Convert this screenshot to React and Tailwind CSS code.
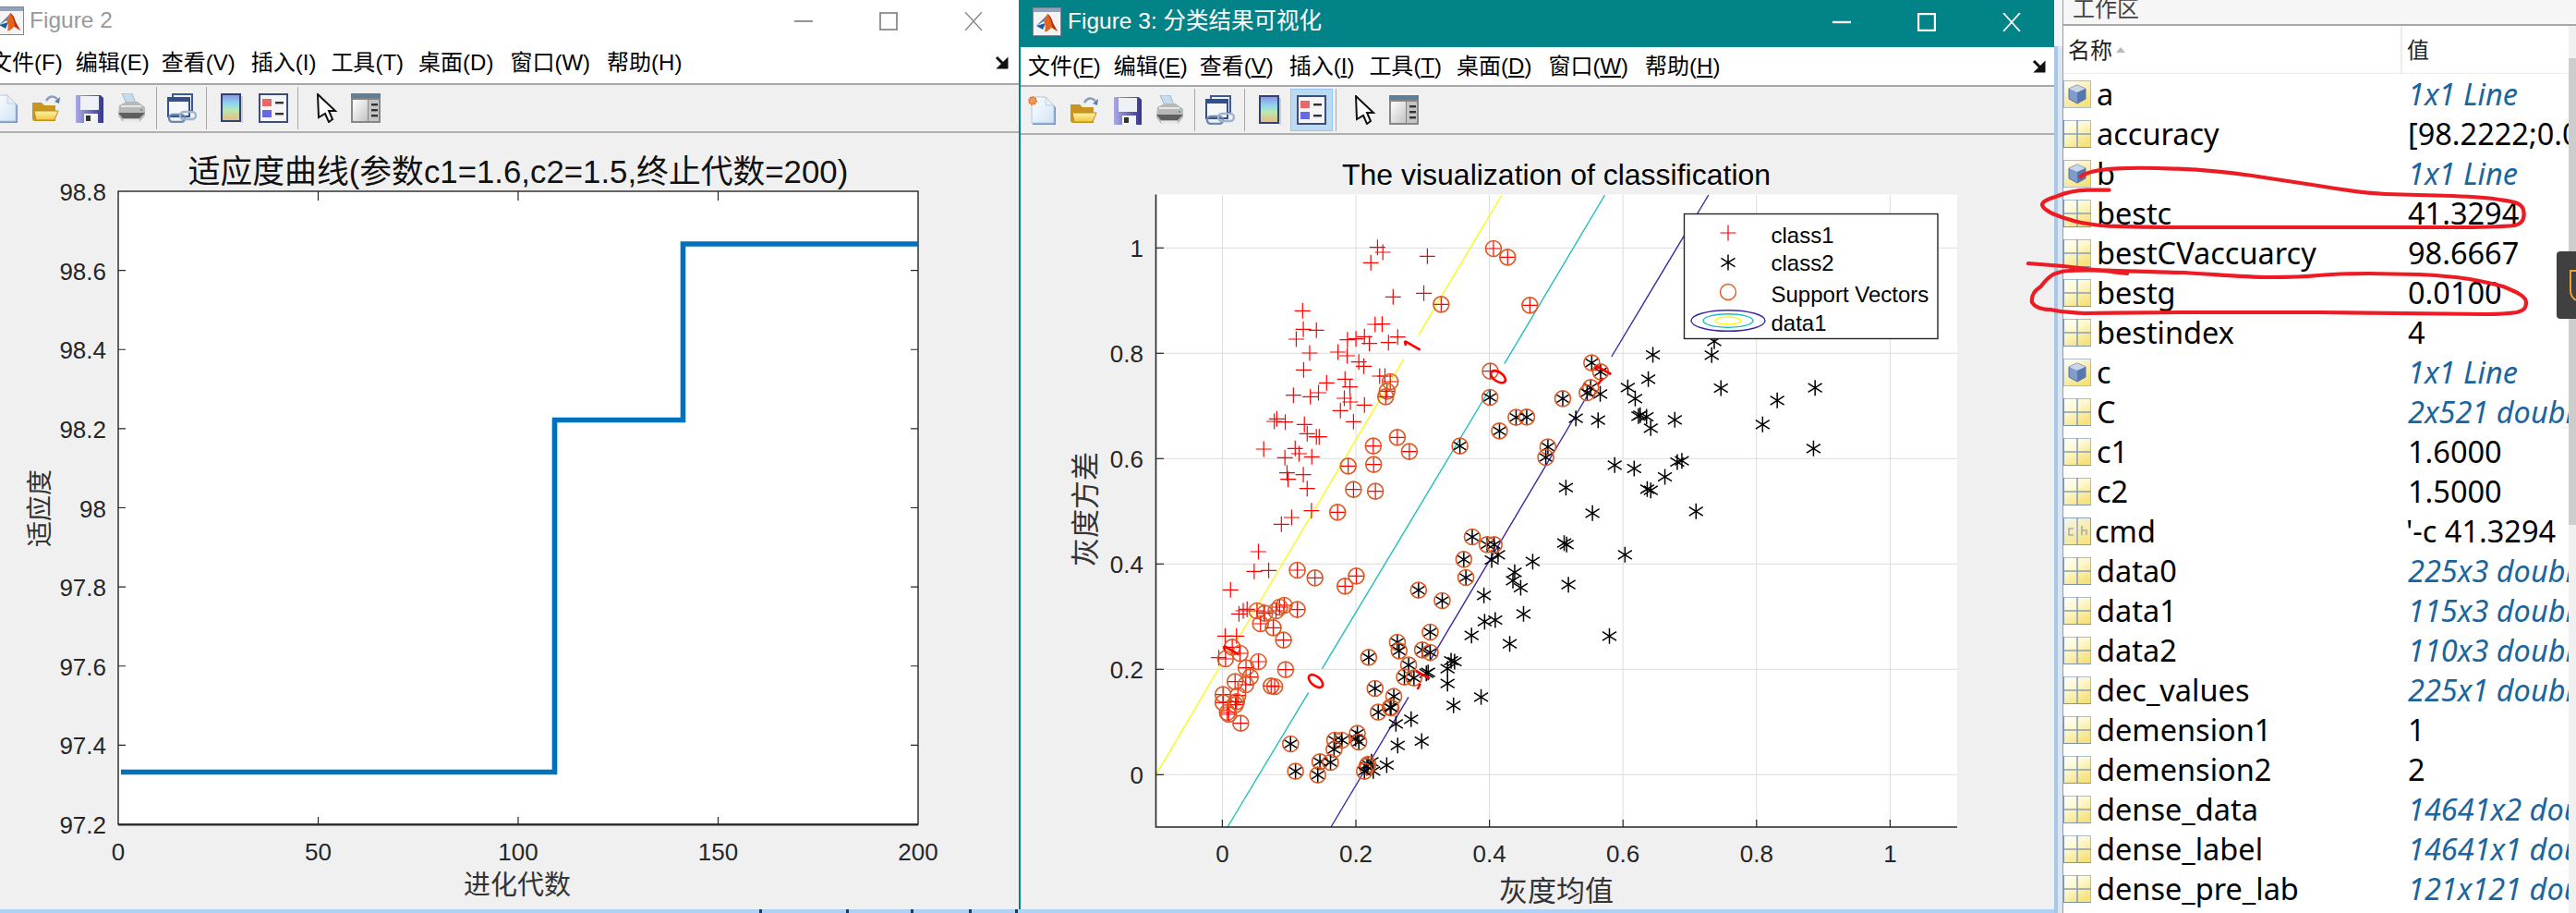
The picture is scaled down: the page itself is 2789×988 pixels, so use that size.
import React from "react";

const SANS = "[font-family:'Liberation_Sans','Noto_Sans_CJK_SC',sans-serif]";
const LABEL = "'Liberation Sans','Noto Sans CJK SC',sans-serif";

const menuItems = [
  ["文件", "F", ""],
  ["编辑", "E", "ml-[14px]"],
  ["查看", "V", "ml-[13px]"],
  ["插入", "I", "ml-[17px]"],
  ["工具", "T", "ml-[16px]"],
  ["桌面", "D", "ml-[16px]"],
  ["窗口", "W", "ml-[18px]"],
  ["帮助", "H", "ml-[18px]"],
];

function MatlabIcon() {
  return (
    <svg width="31" height="31" viewBox="0 0 31 31" className="shrink-0">
      <rect x="0.5" y="0.5" width="30" height="30" fill="#f4f4f4" stroke="#7d8797" />
      <rect x="1" y="1" width="29" height="4" fill="#8fa3bd" />
      <path d="M4 20 L12 15 L16 8 Z" fill="#3a7cc4" />
      <path d="M4 20 L11 24 L14 17 Z" fill="#1f5aa0" />
      <path d="M16 7 Q19 8 22 17 L27 26 L20 22 Q16 27 13 26 Q15 20 12 15 Z" fill="#e2641d" />
      <path d="M16 7 Q20 9 22 17 L27 26 L21 21 Q20 13 16 7 Z" fill="#b5301a" />
    </svg>
  );
}

function Controls({ color, strong }) {
  const w = strong ? 2.4 : 1.8;
  return (
    <div className="ml-auto flex gap-[72px]">
      <svg width="20" height="20" viewBox="0 0 20 20">
        <path d="M0 10 H20" stroke={color} strokeWidth={w} />
      </svg>
      <svg width="20" height="20" viewBox="0 0 20 20">
        <rect x="1" y="1" width="18" height="18" fill="none" stroke={color} strokeWidth={w} />
      </svg>
      <svg width="20" height="20" viewBox="0 0 20 20">
        <path d="M1 0 L19 20 M19 0 L1 20" stroke={color} strokeWidth={strong ? 1.8 : 1.4} />
      </svg>
    </div>
  );
}

function Menu({ underline, offset }) {
  return (
    <div className={`flex items-center text-[24px] leading-none text-black whitespace-nowrap ${offset}`}>
      {menuItems.map(([zh, key, gap]) => (
        <span key={zh} className={gap}>
          {zh}(<span className={underline ? "underline underline-offset-2" : ""}>{key}</span>)
        </span>
      ))}
    </div>
  );
}

function NewIcon() {
  return (
    <svg width="32" height="32" viewBox="0 0 32 32" className="ml-[7px] shrink-0">
      <defs>
        <linearGradient id="pg" x1="0" y1="0" x2="1" y2="1">
          <stop offset="0" stopColor="#ffffff" />
          <stop offset="1" stopColor="#cfe4f7" />
        </linearGradient>
      </defs>
      <path d="M6 3 H21 L31 13 V32 H6 Z" fill="#7f93c2" />
      <path d="M5 2 H20 L29 11 V30 H5 Z" fill="url(#pg)" stroke="#b4c6e0" />
      <path d="M20 2 V11 H29 Z" fill="#e7effa" stroke="#a9bcd8" strokeWidth="0.6" />
      <circle cx="6" cy="6" r="4" fill="#ee9a55" stroke="#e0632a" strokeWidth="1.5" strokeDasharray="2 1" />
    </svg>
  );
}
function OpenIcon() {
  return (
    <svg width="32" height="32" viewBox="0 0 32 32" className="ml-[14px] shrink-0">
      <defs>
        <linearGradient id="fo" x1="0" y1="0" x2="0" y2="1">
          <stop offset="0" stopColor="#fff3a6" />
          <stop offset="1" stopColor="#f0c63c" />
        </linearGradient>
      </defs>
      <path d="M1 10 H11 L14 13 H26 V30 H4 Q1 30 1 27 Z" fill="#c8961e" />
      <path d="M3 19 H29 L25 29 H5 Z" fill="url(#fo)" stroke="#b98a1d" />
      <path d="M16 8 Q21 0 28 6" fill="none" stroke="#8aa0ba" strokeWidth="2.4" />
      <path d="M25 9 L31 4 L30 11 Z" fill="#5c7fa6" />
    </svg>
  );
}
function SaveIcon() {
  return (
    <svg width="32" height="32" viewBox="0 0 32 32" className="ml-[15px] shrink-0">
      <defs>
        <linearGradient id="fl" x1="0" y1="0" x2="1" y2="0">
          <stop offset="0" stopColor="#a9a9e8" />
          <stop offset="1" stopColor="#35358f" />
        </linearGradient>
      </defs>
      <path d="M1 2 H28 L31 5 V32 H1 Z" fill="url(#fl)" />
      <rect x="6" y="3" width="20" height="15" fill="#eef2f7" />
      <rect x="10" y="22" width="15" height="10" fill="#f4f4f4" />
      <rect x="12" y="24" width="5" height="6" fill="#333" />
    </svg>
  );
}
function PrintIcon() {
  return (
    <svg width="32" height="32" viewBox="0 0 32 32" className="ml-[14px] shrink-0">
      <path d="M5 0 H16 L20 11 H10 Z" fill="#c5dcee" stroke="#9fb7c8" />
      <path d="M2 13 L10 9 H22 L30 15 V24 L24 31 H6 L1 24 Z" fill="#b8b8b8" />
      <path d="M1 21 H30 L24 27 H6 Z" fill="#5f5f5f" />
      <path d="M4 14 H26" stroke="#e6e6e6" strokeWidth="2" />
      <path d="M6 28 H24 V31 H6 Z" fill="#e8e8e8" />
      <rect x="25" y="17" width="2" height="2" fill="#5aa55a" />
    </svg>
  );
}
function LinkIcon() {
  return (
    <svg width="32" height="32" viewBox="0 0 32 32" className="ml-[11px] shrink-0">
      <rect x="6" y="1" width="21" height="18" fill="#f0f3fa" stroke="#3c5a96" strokeWidth="2" />
      <rect x="1" y="5" width="23" height="20" fill="#f6f7fb" stroke="#34508c" strokeWidth="2" />
      <rect x="1" y="5" width="23" height="4" fill="#34508c" />
      <rect x="2" y="23" width="17" height="8" rx="4" fill="none" stroke="#6e89ad" strokeWidth="2.4" />
      <rect x="14" y="20" width="17" height="8" rx="4" fill="none" stroke="#9fb4cc" strokeWidth="2.4" />
    </svg>
  );
}
function ColorbarIcon() {
  return (
    <svg width="32" height="32" viewBox="0 0 32 32" className="ml-[10px] shrink-0">
      <defs>
        <linearGradient id="cb" x1="0" y1="0" x2="0" y2="1">
          <stop offset="0" stopColor="#8e8ee6" />
          <stop offset="0.35" stopColor="#8ed6ee" />
          <stop offset="0.6" stopColor="#b8e8b0" />
          <stop offset="1" stopColor="#f0b878" />
        </linearGradient>
      </defs>
      <rect x="27" y="3" width="2" height="29" fill="#cfcfcf" />
      <rect x="6" y="1" width="20" height="29" fill="url(#cb)" stroke="#2f4377" strokeWidth="2" />
    </svg>
  );
}
function LegendIcon({ active }) {
  return (
    <div className={`ml-[7px] flex h-[46px] w-[46px] shrink-0 items-center justify-center border ${active ? "border-[#94c8f2] bg-[#bcdaf2]" : "border-transparent"}`}>
      <svg width="32" height="32" viewBox="0 0 32 32">
        <rect x="1" y="1" width="30" height="30" fill="#f6f6f8" stroke="#3b4d7c" strokeWidth="2" />
        <rect x="4" y="6" width="10" height="8" fill="#e86868" />
        <rect x="4" y="18" width="10" height="8" fill="#6868e6" />
        <rect x="18" y="9" width="9" height="2.4" fill="#333" />
        <rect x="18" y="21" width="9" height="2.4" fill="#333" />
      </svg>
    </div>
  );
}
function PointerIcon() {
  return (
    <svg width="32" height="32" viewBox="0 0 32 32" className="ml-[15px] shrink-0">
      <path d="M6 1 L25 19 L18 19 L22 28 L18 31 L14 22 L7 26 Z" fill="#ffffff" stroke="#111" strokeWidth="2" />
    </svg>
  );
}
function PanelIcon() {
  return (
    <svg width="32" height="32" viewBox="0 0 32 32" className="ml-[10px] shrink-0">
      <defs>
        <linearGradient id="pn" x1="0" y1="0" x2="1" y2="1">
          <stop offset="0" stopColor="#ffffff" />
          <stop offset="1" stopColor="#c4c4c4" />
        </linearGradient>
      </defs>
      <rect x="0" y="0" width="32" height="32" fill="#868686" />
      <rect x="0" y="0" width="32" height="5" fill="#5f7f96" />
      <rect x="2" y="7" width="16" height="23" fill="url(#pn)" />
      <rect x="19" y="7" width="11" height="23" fill="#c4c4c4" />
      <rect x="22" y="11" width="7" height="2.4" fill="#333" />
      <rect x="22" y="17" width="7" height="2.4" fill="#333" />
      <rect x="22" y="23" width="7" height="2.4" fill="#333" />
    </svg>
  );
}
function Sep({ cls }) {
  return <div className={`h-[46px] w-px shrink-0 bg-[#a8a8a8] ${cls}`} />;
}

function Toolbar({ active, offset }) {
  return (
    <div className={`flex items-center ${offset}`}>
      <NewIcon />
      <OpenIcon />
      <SaveIcon />
      <PrintIcon />
      <Sep cls="ml-[10px]" />
      <LinkIcon />
      <Sep cls="ml-[10px]" />
      <ColorbarIcon />
      <LegendIcon active={active} />
      <Sep cls="ml-[3px]" />
      <PointerIcon />
      <PanelIcon />
    </div>
  );
}

function Overflow() {
  return (
    <svg width="16" height="16" viewBox="0 0 16 16" className="ml-auto shrink-0">
      <path d="M2 2 L11 11 M13 5 V13 H5 Z" stroke="#111" strokeWidth="3" fill="#111" />
    </svg>
  );
}

const TICK = "#262626";

function Figure2Chart() {
  const xt = [0, 50, 100, 150, 200];
  const yt = ["98.8", "98.6", "98.4", "98.2", "98", "97.8", "97.6", "97.4", "97.2"];
  return (
    <svg viewBox="0 144 1103 840" className="block h-[840px] w-[1103px]" style={{ fontFamily: LABEL }}>
      <text x="561" y="185" fontSize="34.8" textAnchor="middle" dominantBaseline="central" fill="#111">
        适应度曲线(参数c1=1.6,c2=1.5,终止代数=200)
      </text>
      <rect x="128" y="207" width="866" height="685" fill="#fff" stroke={TICK} strokeWidth="1.4" />
      <path d="M128 892.5 H994" stroke={TICK} strokeWidth="2" />
      {xt.map((t, i) => {
        const x = 128 + (866 * i) / 4;
        return (
          <g key={t}>
            {i > 0 && i < 4 && <path d={`M${x} 892 V884 M${x} 207 V217`} stroke={TICK} strokeWidth="1.2" />}
            <text x={x} y="922" fontSize="26" textAnchor="middle" dominantBaseline="central" fill="#262626">
              {t}
            </text>
          </g>
        );
      })}
      {yt.map((t, i) => {
        const y = 207 + (685 * i) / 8;
        return (
          <g key={t}>
            {i > 0 && i < 8 && <path d={`M128 ${y} H136 M994 ${y} H986`} stroke={TICK} strokeWidth="1.2" />}
            <text x="115" y={y + 1} fontSize="26" textAnchor="end" dominantBaseline="central" fill="#262626">
              {t}
            </text>
          </g>
        );
      })}
      <text x="560" y="958" fontSize="29" textAnchor="middle" dominantBaseline="central" fill="#333">
        进化代数
      </text>
      <text x="0" y="0" fontSize="28" textAnchor="middle" dominantBaseline="central" fill="#333" transform="translate(43 550) rotate(-90)">
        适应度
      </text>
      <path d="M131 835.5 H600.5 V454.5 H739.5 V264 H994" fill="none" stroke="#0072bd" strokeWidth="5.6" />
    </svg>
  );
}

const z5 = ([x, y]) => [1240 + x / 2.613, 200 + y / 3];
const z6 = ([x, y]) => [1240 + x / 2.613, 580 + y / 3];
const z7 = ([x, y]) => [1700 + x / 2.904, 200 + y / 3];

const plus = [
  ...[[657,200],[672,216],[638,250],[798,229],[701,361],[788,349],[445,406],[447,466],[484,469],[427,498],[650,450],[670,449],[620,490],[714,491],[688,509],[572,500],[596,497],[634,512],[465,543],[545,540],[571,552],[604,572],[618,586],[448,598],[663,618],[678,618],[565,628],[513,640],[579,653],[419,680],[467,685],[490,672],[563,690],[580,702],[620,712],[552,730],[589,766],[372,757],[365,765],[396,767],[450,775],[458,805],[484,815],[492,815],[335,855],[424,853],[435,870],[395,883],[471,880],[401,932],[447,938],[404,953],[458,983],[470,1055],[414,1077],[385,1099],[320,1188]].map(z5),
  ...[[308,112],[349,109],[241,172],[265,250],[277,240],[288,235],[226,322],[258,322],[208,392],[335,243]].map(z6),
];
const svPlus = [
  ...[[985,204],[1025,232],[837,385],[1088,388],[976,602],[693,636],[684,667],[680,685],[713,817],[645,845],[747,863],[574,910],[646,905],[589,986],[651,992],[544,1060]].map(z5),
  ...[[430,108],[480,133],[565,160],[597,127],[430,236],[393,222],[380,228],[370,240],[338,248],[316,240],[326,282],[362,295],[391,335],[246,358],[268,378],[227,396],[320,405],[397,431],[285,425],[297,455],[254,470],[284,480],[356,484],[366,486],[220,512],[262,515],[220,538],[258,535],[255,545],[232,570],[236,576],[270,605]].map(z6),
];
const svStar = [
  ...[[1263,575],[1288,604],[1260,655],[1250,672],[1181,691],[975,687],[1049,752],[1079,751],[1002,796],[890,845],[1139,848],[1133,882],[925,1140],[967,1165],[987,1165]].map(z5),
  ...[[901,73],[907,132],[773,173],[840,207],[806,309],[713,342],[718,370],[784,367],[806,375],[632,391],[745,416],[733,455],[760,458],[650,492],[703,518],[659,569],[693,553],[695,555],[600,638],[604,666],[536,660],[556,660],[534,690],[411,672],[494,730],[524,732],[425,761],[488,773],[630,738],[627,745],[620,761]].map(z6),
];
const star = [
  ...[[1436,549],[1423,628],[1365,655],[1386,691],[1287,676],[1218,755],[1281,761],[1395,748],[1400,745],[1418,750],[1430,787],[1498,760],[1328,907],[1383,918],[1505,897],[1518,893],[1470,945],[1190,980],[1420,985],[1430,989],[1265,1063],[1558,1057],[1185,1160],[1192,1165]].map(z5),
  ...[[445,550],[453,505],[474,657],[651,697],[770,656],[605,775],[765,853]].map(z7),
  ...[[980,75],[998,58],[1096,80],[1045,115],[1040,142],[1062,165],[1197,155],[958,190],[1070,250],[960,275],[990,270],[923,320],[1031,347],[1313,322],[1357,58],[865,402],[875,405],[855,428],[800,440],[795,443],[855,476],[872,547],[950,520],[752,592],[709,607],[714,677],[782,663],[640,730],[645,760],[683,741],[595,655]].map(z6),
];

const Plus = ({ x, y }) => <path d={`M${x - 8.5} ${y} H${x + 8.5} M${x} ${y - 8.5} V${y + 8.5}`} stroke="#ff0000" strokeWidth="1.2" fill="none" />;
const Star = ({ x, y }) => (
  <path
    d={`M${x} ${y - 8.5} V${y + 8.5} M${x - 7.5} ${y - 4.7} L${x + 7.5} ${y + 4.7} M${x - 7.5} ${y + 4.7} L${x + 7.5} ${y - 4.7}`}
    stroke="#000"
    strokeWidth="1.5"
    fill="none"
  />
);
const Ring = ({ x, y }) => <circle cx={x} cy={y} r="8.5" fill="none" stroke="#dd5a24" strokeWidth="1.6" />;

function Figure3Chart() {
  const X = (v) => 1323.4 + 723 * v;
  const Y = (v) => 837.3 - 570 * v;
  const xt = [0, 0.2, 0.4, 0.6, 0.8, 1];
  const yt = [0, 0.2, 0.4, 0.6, 0.8, 1];
  return (
    <svg viewBox="1105 145 1119 839" className="block h-[839px] w-[1119px]" style={{ fontFamily: LABEL }}>
      <text x="1685" y="188" fontSize="32" textAnchor="middle" dominantBaseline="central" fill="#000">
        The visualization of classification
      </text>
      <rect x="1251.5" y="209.5" width="867.5" height="684.5" fill="#fff" />
      {xt.map((t) => (
        <path key={t} d={`M${X(t)} 210 V894`} stroke="#dcdcdc" strokeWidth="1" />
      ))}
      {yt.map((t) => (
        <path key={t} d={`M1252 ${Y(t)} H2119`} stroke="#dcdcdc" strokeWidth="1" />
      ))}
      <g fill="none" strokeWidth="1.4">
        <path d="M1251.5 837.7 L1322 718 M1338.7 693 L1519.8 387.7 M1535.8 361.7 L1625.8 210" stroke="#f9fb15" />
        <path d="M1329 894 L1416.8 748.3 M1431.4 722.7 L1613 420 M1628.8 392.7 L1737.5 210" stroke="#1fc0bb" />
        <path d="M1441 894 L1525 753.3 M1548 714.3 L1721 423 M1744.8 385 L1849.8 210" stroke="#3e26a8" />
      </g>
      {plus.map(([x, y], i) => <Plus key={i} x={x} y={y} />)}
      {star.map(([x, y], i) => <Star key={i} x={x} y={y} />)}
      {svPlus.map(([x, y], i) => (
        <g key={i}>
          <Plus x={x} y={y} />
          <Ring x={x} y={y} />
        </g>
      ))}
      {svStar.map(([x, y], i) => (
        <g key={i}>
          <Star x={x} y={y} />
          <Ring x={x} y={y} />
        </g>
      ))}
      <g fill="none" stroke="#ff0000" strokeWidth="2.6">
        <ellipse cx="1622" cy="406.7" rx="9" ry="5" transform="rotate(35 1622 406.7)" />
        <ellipse cx="1424.5" cy="736" rx="9" ry="5" transform="rotate(40 1424.5 736)" />
        <path d="M1521 368 L1537.7 377.7 M1521 368 L1522 373" />
        <path d="M1728 395 L1744.4 404 M1728 395 L1729 400 M1730 415 L1735.6 408" />
        <path d="M1325 698 L1341.4 707.3 M1325 698 L1326 703" />
        <path d="M1532.8 725 L1548 733.3 M1534.7 745 L1537.7 739" />
      </g>
      <path d="M1251.5 209.5 V894 H2119" fill="none" stroke={TICK} strokeWidth="1.6" />
      {xt.map((t) => (
        <g key={t}>
          <path d={`M${X(t)} 894 V886`} stroke={TICK} strokeWidth="1.2" />
          <text x={X(t)} y="923" fontSize="26" textAnchor="middle" dominantBaseline="central" fill="#262626">
            {t}
          </text>
        </g>
      ))}
      {yt.map((t) => (
        <g key={t}>
          <path d={`M1252 ${Y(t)} H1260`} stroke={TICK} strokeWidth="1.2" />
          <text x="1238" y={Y(t) + 1} fontSize="26" textAnchor="end" dominantBaseline="central" fill="#262626">
            {t}
          </text>
        </g>
      ))}
      <text x="1685" y="963" fontSize="31" textAnchor="middle" dominantBaseline="central" fill="#333">
        灰度均值
      </text>
      <text x="0" y="0" fontSize="31" textAnchor="middle" dominantBaseline="central" fill="#333" transform="translate(1175 550) rotate(-90)">
        灰度方差
      </text>
      <rect x="1823.5" y="230.5" width="274.5" height="135" fill="#fff" stroke={TICK} strokeWidth="1.4" />
      <Plus x={1871} y={251} />
      <Star x={1871} y={283} />
      <circle cx="1871" cy="315" r="8.5" fill="none" stroke="#dd5a24" strokeWidth="1.4" />
      <g fill="none" strokeWidth="1.4">
        <ellipse cx="1871" cy="346" rx="40" ry="11.3" stroke="#3e26a8" />
        <ellipse cx="1871" cy="346" rx="27" ry="7.3" stroke="#1fc0bb" />
        <ellipse cx="1871" cy="346" rx="14" ry="4" stroke="#f9fb15" />
      </g>
      <g fontSize="24" fill="#000" dominantBaseline="central">
        <text x="1917.5" y="253">class1</text>
        <text x="1917.5" y="283">class2</text>
        <text x="1917.5" y="317">Support Vectors</text>
        <text x="1917.5" y="348">data1</text>
      </g>
    </svg>
  );
}

function GridIcon() {
  return (
    <svg width="30" height="30" viewBox="0 0 30 30" className="shrink-0">
      <defs>
        <linearGradient id="vg" x1="0" y1="0" x2="0.6" y2="1">
          <stop offset="0" stopColor="#ffffff" />
          <stop offset="0.45" stopColor="#fdf8cf" />
          <stop offset="1" stopColor="#f6e27c" />
        </linearGradient>
      </defs>
      <rect x="0.5" y="0.5" width="29" height="29" fill="url(#vg)" stroke="#a9bdcf" />
      <path d="M15 0 V30 M0 15 H30" stroke="#8aa0b6" strokeWidth="1.6" />
      <path d="M0 29.5 H30 M0.5 0 V30" stroke="#7f95ab" strokeWidth="1" />
    </svg>
  );
}
function ObjIcon() {
  return (
    <svg width="30" height="30" viewBox="0 0 30 30" className="shrink-0">
      <defs>
        <linearGradient id="vo" x1="0" y1="0" x2="0.6" y2="1">
          <stop offset="0" stopColor="#ffffff" />
          <stop offset="1" stopColor="#f6e27c" />
        </linearGradient>
      </defs>
      <rect x="0.5" y="0.5" width="29" height="29" fill="url(#vo)" stroke="#a9bdcf" />
      <path d="M15 5 L24 9 V20 L15 25 L6 20 V9 Z" fill="#7f9ccc" stroke="#5b6f96" />
      <path d="M6 9 L15 13 L24 9 L15 5 Z" fill="#c9d6ea" />
      <path d="M15 13 V25 L24 20 V9 Z" fill="#5678b0" />
    </svg>
  );
}
function CharIcon() {
  return (
    <svg width="30" height="30" viewBox="0 0 30 30" className="shrink-0">
      <defs>
        <linearGradient id="vc" x1="0" y1="0" x2="0.6" y2="1">
          <stop offset="0" stopColor="#f4f7f2" />
          <stop offset="1" stopColor="#f5e588" />
        </linearGradient>
      </defs>
      <rect x="0.5" y="0.5" width="29" height="29" fill="url(#vc)" stroke="#8aa0b6" />
      <path d="M15 0 V30" stroke="#8aa0b6" strokeWidth="1.4" />
      <path d="M11 12 H6 V19 H11 M20 9 V19 M20 14 H25 V19" fill="none" stroke="#b0b09a" strokeWidth="1.6" />
    </svg>
  );
}

const rows = [
  ["a", "1x1 Line", "o"],
  ["accuracy", "[98.2222;0.0222]", "g"],
  ["b", "1x1 Line", "o"],
  ["bestc", "41.3294", "g"],
  ["bestCVaccuarcy", "98.6667", "g"],
  ["bestg", "0.0100", "g"],
  ["bestindex", "4", "g"],
  ["c", "1x1 Line", "o"],
  ["C", "2x521 double", "gi"],
  ["c1", "1.6000", "g"],
  ["c2", "1.5000", "g"],
  ["cmd", "'-c 41.3294", "c"],
  ["data0", "225x3 double", "gi"],
  ["data1", "115x3 double", "gi"],
  ["data2", "110x3 double", "gi"],
  ["dec_values", "225x1 double", "gi"],
  ["demension1", "1", "g"],
  ["demension2", "2", "g"],
  ["dense_data", "14641x2 double", "gi"],
  ["dense_label", "14641x1 double", "gi"],
  ["dense_pre_lab", "121x121 double", "gi"],
];

function Row({ name, value, kind }) {
  const italic = kind === "o" || kind === "gi";
  return (
    <div className="flex h-[43px] items-center">
      {kind === "o" ? <ObjIcon /> : kind === "c" ? <CharIcon /> : <GridIcon />}
      <div className={`w-[337px] shrink-0 pl-[6px] ${kind === "c" ? "-ml-[2px]" : ""} text-black`}>{name}</div>
      <div className={`flex-1 overflow-hidden whitespace-pre pl-[6px] ${italic ? "italic text-[#1a659e]" : "text-black"}`}>{value}</div>
    </div>
  );
}

function Workspace() {
  return (
    <div className="flex h-[988px] w-[565px] shrink-0">
      <div className="flex w-[9px] shrink-0 flex-col bg-white">
        <div className="h-[50px] bg-[#f2f5f9]" />
        <div className="flex flex-1">
          <div className="w-[4px] bg-[#a9c8e6]" />
          <div className="w-[5px] bg-[#dbe6f4]" />
        </div>
      </div>
      <div className="flex min-w-0 flex-1 flex-col border-l border-[#9a9a9a]">
        <div className="flex h-[28px] shrink-0 items-center overflow-hidden border-b-2 border-[#a8a8a8] bg-[#f6f6f6] pb-[6px] pl-[10px] text-[24px] leading-none text-[#444]">
          工作区
        </div>
        <div className="flex min-h-0 flex-1">
          <div className="flex w-[547px] shrink-0 flex-col text-[32.5px] leading-[43px] [font-family:'Noto_Sans','Noto_Sans_CJK_SC',sans-serif]">
            <div className="flex h-[52px] shrink-0 items-center border-b border-[#ececec] text-[24px] leading-none text-[#222]">
              <div className="flex h-full w-[367px] items-center border-r-2 border-[#ececec] pl-[5px]">
                名称
                <svg width="10" height="6" viewBox="0 0 10 6" className="ml-[4px]">
                  <path d="M0 6 L5 0 L10 6 Z" fill="#bbb" />
                </svg>
              </div>
              <div className="pl-[5px]">值</div>
            </div>
            {rows.map(([n, v, k]) => (
              <Row key={n} name={n} value={v} kind={k} />
            ))}
          </div>
          <div className="w-[8px] shrink-0 bg-[#f0f0f0]">
            <div className="mt-[35px] h-[505px] bg-[#cdcdcd]" />
          </div>
        </div>
      </div>
    </div>
  );
}

export default function App() {
  return (
    <div className={`relative flex h-[988px] w-[2789px] overflow-hidden bg-white ${SANS}`}>
      {/* Figure 2 */}
      <div className="flex w-[1103px] shrink-0 flex-col overflow-hidden">
        <div className="flex h-[48px] shrink-0 items-center pr-[39px] pb-[3px]">
          <div className="-ml-[5px]">
            <MatlabIcon />
          </div>
          <span className="ml-[6px] text-[24.5px] leading-none text-[#999]">Figure 2</span>
          <Controls color="#8a8a8a" />
        </div>
        <div className="flex h-[44px] shrink-0 items-center border-b-2 border-[#a8a8a8] pr-[10px] pb-[2px]">
          <Menu offset="-ml-[11px]" />
          <Overflow />
        </div>
        <div className="flex h-[52px] shrink-0 items-center border-b-2 border-[#b0b0b0] bg-[#f0f0f0]">
          <Toolbar offset="-ml-[19px]" />
        </div>
        <div className="h-[840px] shrink-0 bg-[#f0f0f0]">
          <Figure2Chart />
        </div>
        <div className="relative h-[4px] shrink-0 bg-[#aed2f6]">
          <span className="absolute left-[822px] top-0 h-[4px] w-[3px] bg-[#1a3a66]" />
          <span className="absolute left-[916px] top-0 h-[4px] w-[3px] bg-[#1a3a66]" />
          <span className="absolute left-[986px] top-0 h-[4px] w-[3px] bg-[#1a3a66]" />
          <span className="absolute left-[1049px] top-0 h-[4px] w-[3px] bg-[#1a3a66]" />
          <span className="absolute left-[1099px] top-0 h-[4px] w-[3px] bg-[#1a3a66]" />
        </div>
      </div>
      {/* Figure 3 */}
      <div className="flex w-[1121px] shrink-0 flex-col">
        <div className="flex h-[51px] shrink-0 items-center bg-[#028387] pr-[36px] pl-[15px] pb-[4px]">
          <MatlabIcon />
          <span className="ml-[7px] text-[24.5px] leading-none text-white">Figure 3: 分类结果可视化</span>
          <Controls color="#ffffff" strong />
        </div>
        <div className="flex min-h-0 flex-1 flex-col border-l-2 border-[#028387]">
          <div className="flex h-[43px] shrink-0 items-center border-b-2 border-[#a8a8a8] bg-white pr-[8px]">
            <Menu underline offset="ml-[8px]" />
            <Overflow />
          </div>
          <div className="flex h-[52px] shrink-0 items-center border-b-2 border-[#b0b0b0] bg-[#f0f0f0]">
            <Toolbar active offset="" />
          </div>
          <div className="h-[838px] shrink-0 overflow-hidden bg-[#f0f0f0]">
            <Figure3Chart />
          </div>
        </div>
        <div className="h-[4px] shrink-0 bg-[#aed2f6]" />
      </div>
      <Workspace />
      {/* hand-drawn annotations over the desktop */}
      <svg className="pointer-events-none absolute inset-0 h-[988px] w-[2789px]" viewBox="0 0 2789 988">
        <g fill="none" stroke="#ed1c24" strokeWidth="4.2" strokeLinecap="round" strokeLinejoin="round">
          <path d="M2252.7 191 C2260 186 2275 183 2292.6 182.3 C2320 181 2340 182 2358 182.7 C2390 184 2410 186 2437.7 190 L2510 201 C2540 206 2560 209 2583 210 L2655 212 C2680 213 2695 214 2706 216 C2720 218 2730 219 2732 227 C2734 236 2731 242 2722.5 244 C2700 246 2680 246 2655 246 L2365 246 C2330 246 2300 246 2274 244 C2258 242 2250 241 2242 238 C2232 235 2214 230 2211 222 C2211 217 2220 215 2228 212 C2240 207 2250 206 2260 205.7 L2283.5 205.7" />
          <path d="M2196 285 L2234 288 L2303 296" />
          <path d="M2240 293 C2260 291 2320 294 2365 295 C2400 297 2430 300 2456 300 C2480 300 2490 300 2510 298 C2530 296 2550 296 2565 296 L2619 297 C2640 298 2660 300 2673.6 302 C2690 305 2700 307 2710 310 C2722 315 2735 320 2735 327 C2735 334 2732 336 2725 338 C2710 340 2700 340 2692 340 L2510 338 L2365 338 L2256 339 C2240 338 2228 337 2220 335 C2212 335 2204 334 2200 327 C2199 318 2204 314 2209.6 310 C2214 304 2218 300 2223 297 C2228 295 2234 293 2240 293" />
        </g>
      </svg>
      <div className="absolute left-[2768px] top-[272px] flex h-[73px] w-[21px] items-center rounded-l-[4px] bg-[#404040] pl-[14px]">
        <svg width="7" height="36" viewBox="0 0 7 36">
          <path d="M7 2 H1 V24 Q1 30 7 34" fill="none" stroke="#f0a030" strokeWidth="2" />
        </svg>
      </div>
    </div>
  );
}
